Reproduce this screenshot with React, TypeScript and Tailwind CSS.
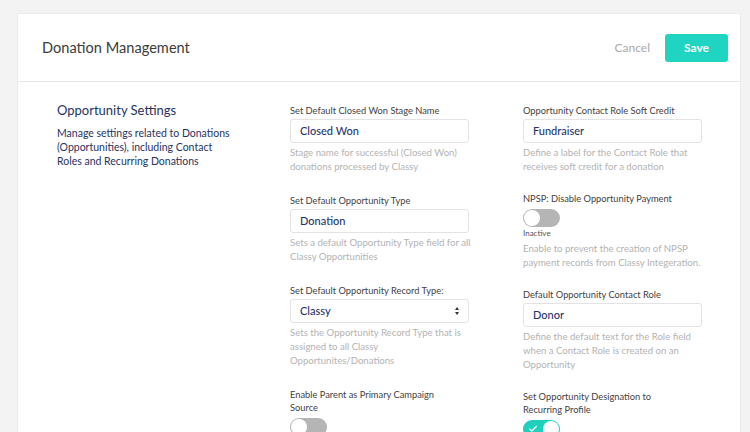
import { Check } from 'lucide-react';

type Field = {
  label: string;
  kind: 'input' | 'select' | 'toggle';
  value?: string;
  on?: boolean;
  status?: string;
  help?: string;
};

const middleFields: Field[] = [
  {
    label: 'Set Default Closed Won Stage Name',
    kind: 'input',
    value: 'Closed Won',
    help: 'Stage name for successful (Closed Won) donations processed by Classy',
  },
  {
    label: 'Set Default Opportunity Type',
    kind: 'input',
    value: 'Donation',
    help: 'Sets a default Opportunity Type field for all Classy Opportunities',
  },
  {
    label: 'Set Default Opportunity Record Type:',
    kind: 'select',
    value: 'Classy',
    help: 'Sets the Opportunity Record Type that is assigned to all Classy Opportunites/Donations',
  },
  {
    label: 'Enable Parent as Primary Campaign Source',
    kind: 'toggle',
    on: false,
  },
];

const rightFields: Field[] = [
  {
    label: 'Opportunity Contact Role Soft Credit',
    kind: 'input',
    value: 'Fundraiser',
    help: 'Define a label for the Contact Role that receives soft credit for a donation',
  },
  {
    label: 'NPSP: Disable Opportunity Payment',
    kind: 'toggle',
    on: false,
    status: 'Inactive',
    help: 'Enable to prevent the creation of NPSP payment records from Classy Integeration.',
  },
  {
    label: 'Default Opportunity Contact Role',
    kind: 'input',
    value: 'Donor',
    help: 'Define the default text for the Role field when a Contact Role is created on an Opportunity',
  },
  {
    label: 'Set Opportunity Designation to Recurring Profile',
    kind: 'toggle',
    on: true,
  },
];

function Toggle({ on }: { on: boolean }) {
  return (
    <div
      className={`relative w-[37px] h-[18px] rounded-full ${on ? 'bg-[#1fd0bd]' : 'bg-[#b5b5b5]'}`}>
      {on && (
        <Check className="absolute left-[5px] top-[4px] text-white" size={10} strokeWidth={3} />
      )}
      <div
        className={`absolute top-[1px] w-[16px] h-[16px] rounded-full bg-white ${on ? 'right-[1px]' : 'left-[1px]'}`}
      />
    </div>
  );
}

function FieldBlock({ field }: { field: Field }) {
  return (
    <div className="flex flex-col">
      <div className="text-[9.3px] leading-[13px] text-[#3f3f3f] pr-[22px]">{field.label}</div>
      {field.kind === 'input' && (
        <div className="mt-[2px] h-[24px] border border-[#e3e3e3] rounded-[3px] flex items-center px-[9px] text-[11px] font-medium text-[#28356a]">
          {field.value}
        </div>
      )}
      {field.kind === 'select' && (
        <div className="mt-[2px] h-[24px] border border-[#e3e3e3] rounded-[3px] flex items-center justify-between px-[9px] text-[11px] font-medium text-[#28356a]">
          <span>{field.value}</span>
          <span className="flex flex-col items-center gap-[2px]">
            <span className="w-0 h-0 border-l-[2.5px] border-r-[2.5px] border-b-[3px] border-l-transparent border-r-transparent border-b-[#333]" />
            <span className="w-0 h-0 border-l-[2.5px] border-r-[2.5px] border-t-[3px] border-l-transparent border-r-transparent border-t-[#333]" />
          </span>
        </div>
      )}
      {field.kind === 'toggle' && (
        <div className="mt-[4px]">
          <Toggle on={!!field.on} />
        </div>
      )}
      {field.status && (
        <div className="text-[8px] leading-[11px] text-[#555] mt-[1px]">{field.status}</div>
      )}
      {field.help && (
        <div className="mt-[3px] w-[184px] text-[9.6px] leading-[14px] text-[#b3b3b3]">
          {field.help}
        </div>
      )}
    </div>
  );
}

export default function App() {
  return (
    <div
      className="w-[750px] h-[432px] overflow-hidden bg-[#f3f3f4] pt-[13px] pl-[17px]"
      style={{ fontFamily: 'Lato, "Open Sans", sans-serif' }}>
      <div className="w-[724px] h-[440px] bg-white border border-[#ececec] rounded-[2px]">
        <div className="h-[68px] flex items-center justify-between pl-[24px] pr-[12px] border-b border-[#e8e8e8]">
          <span className="text-[14.6px] text-[#3b3b3b]">Donation Management</span>
          <div className="flex items-center gap-[15px]">
            <span className="text-[12px] text-[#a9a9a9]">Cancel</span>
            <button className="w-[63px] h-[28px] rounded-[3px] bg-[#1fd4c0] text-white text-[12px] font-bold">
              Save
            </button>
          </div>
        </div>
        <div className="flex pl-[39px] pt-[19px]">
          <div className="w-[233px] flex flex-col">
            <div className="text-[13px] leading-[18px] text-[#27335e]">Opportunity Settings</div>
            <div className="mt-[7px] w-[180px] text-[10.5px] leading-[14px] text-[#27335e]">
              Manage settings related to Donations (Opportunities), including Contact Roles and
              Recurring Donations
            </div>
          </div>
          <div className="w-[179px] flex flex-col gap-[20px] pt-[3px]">
            {middleFields.map((f) => (
              <FieldBlock key={f.label} field={f} />
            ))}
          </div>
          <div className="w-[179px] ml-[54px] flex flex-col gap-[18px] pt-[3px]">
            {rightFields.map((f) => (
              <FieldBlock key={f.label} field={f} />
            ))}
          </div>
        </div>
      </div>
    </div>
  );
}
